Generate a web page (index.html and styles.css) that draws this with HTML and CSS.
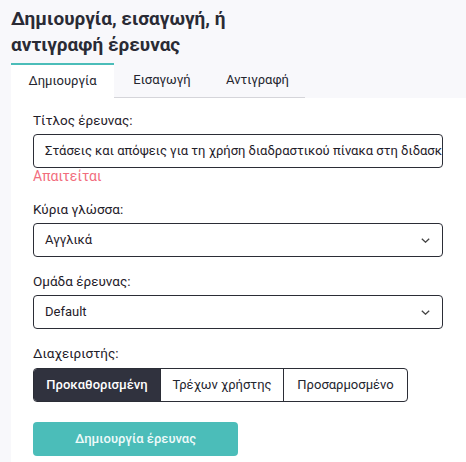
FILE: index.html
```html
<!DOCTYPE html>
<html>
<head>
<meta charset="utf-8">
<link rel="stylesheet" href="styles.css">
</head>
<body>
<div class="page">
  <h1 class="title">Δημιουργία, εισαγωγή, ή<br>αντιγραφή έρευνας</h1>
  <div class="tabs">
    <div class="tab active">Δημιουργία</div>
    <div class="tab">Εισαγωγή</div>
    <div class="tab">Αντιγραφή</div>
  </div>
  <div class="panel">
    <div class="field">
      <label class="label">Τίτλος έρευνας:</label>
      <div class="input">Στάσεις και απόψεις για τη χρήση διαδραστικού πίνακα στη διδασκαλία</div>
      <div class="error">Απαιτείται</div>
    </div>
    <div class="field">
      <label class="label">Κύρια γλώσσα:</label>
      <div class="input select"><span>Αγγλικά</span>
        <svg class="chev" width="9" height="5" viewBox="0 0 9 5"><path d="M0.8 0.8 L4.5 4.2 L8.2 0.8" fill="none" stroke="#444" stroke-width="1.3"/></svg>
      </div>
    </div>
    <div class="field">
      <label class="label">Ομάδα έρευνας:</label>
      <div class="input select"><span>Default</span>
        <svg class="chev" width="9" height="5" viewBox="0 0 9 5"><path d="M0.8 0.8 L4.5 4.2 L8.2 0.8" fill="none" stroke="#444" stroke-width="1.3"/></svg>
      </div>
    </div>
    <div class="field">
      <label class="label">Διαχειριστής:</label>
      <div class="group">
        <div class="seg on">Προκαθορισμένη</div>
        <div class="seg">Τρέχων χρήστης</div>
        <div class="seg">Προσαρμοσμένο</div>
      </div>
    </div>
    <div class="submit">Δημιουργία έρευνας</div>
  </div>
</div>
</body>
</html>
```
FILE: styles.css
```css
* { box-sizing: border-box; }
html, body { margin: 0; padding: 0; }
body {
  background: #f8f8fb;
  font-family: Roboto, "Liberation Sans", sans-serif;
  color: #24252e;
}
.page { padding: 6px 0 0 11px; }
.title {
  margin: 0 0 5px 0;
  font-size: 19px;
  line-height: 26px;
  font-weight: 700;
  color: #2a2b35;
}
.tabs { display: flex; }
.tab {
  height: 35px;
  line-height: 33px;
  font-size: 13px;
  border-bottom: 1px solid #d5d5da;
  color: #24252e;
  text-align: center;
}
.tab.active {
  background: #fff;
  border-top: 2px solid #4bbdb9;
  border-bottom: 1px solid #fff;
  width: 103px;
  line-height: 31px;
}
.tab:nth-child(2) { width: 96px; }
.tab:nth-child(3) { width: 95px; }
.panel {
  background: #fff;
  padding: 14px 23px 5px 22px;
  min-height: 370px;
}
.field { margin-bottom: 16px; }
.label {
  display: block;
  font-size: 13.5px;
  line-height: 17px;
  margin-bottom: 5px;
  color: #1f2029;
}
.input {
  height: 34px;
  border: 1px solid #2b2d36;
  border-radius: 4px;
  padding: 0 11px;
  font-size: 13px;
  line-height: 32px;
  white-space: nowrap;
  overflow: hidden;
  color: #1f2029;
}
.select { display: flex; justify-content: space-between; align-items: center; padding-right: 12px; }
.chev { flex: none; }
.error {
  color: #f26d7d;
  font-size: 14px;
  line-height: 17px;
  margin-top: 0;
  margin-bottom: 6px;
}
.group {
  display: inline-flex;
  margin-top: 1px;
  border: 1px solid #2b2d36;
  border-radius: 4px;
  overflow: hidden;
  height: 34px;
}
.seg {
  font-size: 13px;
  line-height: 32px;
  border-left: 1px solid #2b2d36;
  text-align: center;
  white-space: nowrap;
}
.seg:first-child { border-left: none; width: 126px; }
.seg:nth-child(2) { width: 123px; }
.seg:nth-child(3) { width: 124px; }
.seg.on { background: #30323e; color: #fff; font-weight: 500; }
.submit {
  margin-top: 20px;
  width: 205px;
  height: 34px;
  border-radius: 4px;
  background: #4bbdb9;
  color: #eefaf9;
  font-size: 13px;
  font-weight: 500;
  line-height: 34px;
  text-align: center;
}
```
